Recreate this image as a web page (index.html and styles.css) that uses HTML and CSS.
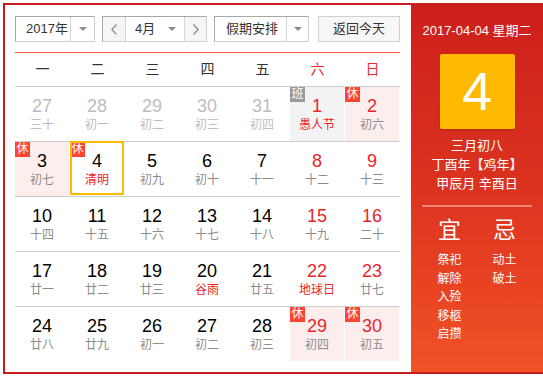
FILE: index.html
```html
<!DOCTYPE html>
<html lang="zh">
<head>
<meta charset="utf-8">
<link rel="stylesheet" href="styles.css">
</head>
<body>
<div class="cal">
  <div class="main">
    <div class="controls">
      <div class="sel sel-year"><span class="sel-text">2017年</span><span class="sel-arrow"><i class="tri"></i></span></div>
      <div class="month-group">
        <span class="nav"><svg width="6" height="11" viewBox="0 0 6 11"><polyline points="5.5,0.5 0.8,5.5 5.5,10.5" fill="none" stroke="#888" stroke-width="1.2"/></svg></span>
        <span class="month"><span class="sel-text">4月</span><i class="tri"></i></span>
        <span class="nav nav-r"><svg width="6" height="11" viewBox="0 0 6 11"><polyline points="0.5,0.5 5.2,5.5 0.5,10.5" fill="none" stroke="#888" stroke-width="1.2"/></svg></span>
      </div>
      <div class="sel sel-hol"><span class="sel-text">假期安排</span><span class="sel-arrow"><i class="tri"></i></span></div>
      <div class="btn-today">返回今天</div>
    </div>
    <div class="week">
      <span>一</span><span>二</span><span>三</span><span>四</span><span>五</span><span class="we">六</span><span class="we">日</span>
    </div>
    <div class="grid">
      <div class="row">
        <div class="cell other"><div class="in"><b>27</b><small>三十</small></div></div>
        <div class="cell other"><div class="in"><b>28</b><small>初一</small></div></div>
        <div class="cell other"><div class="in"><b>29</b><small>初二</small></div></div>
        <div class="cell other"><div class="in"><b>30</b><small>初三</small></div></div>
        <div class="cell other"><div class="in"><b>31</b><small>初四</small></div></div>
        <div class="cell work wkend"><div class="in"><em class="badge badge-work">班</em><b>1</b><small class="fest">愚人节</small></div></div>
        <div class="cell rest wkend"><div class="in"><em class="badge">休</em><b>2</b><small>初六</small></div></div>
      </div>
      <div class="row">
        <div class="cell rest"><div class="in"><em class="badge">休</em><b>3</b><small>初七</small></div></div>
        <div class="cell today"><div class="in"><em class="badge">休</em><b>4</b><small class="fest">清明</small></div><span class="ring"></span></div>
        <div class="cell"><div class="in"><b>5</b><small>初九</small></div></div>
        <div class="cell"><div class="in"><b>6</b><small>初十</small></div></div>
        <div class="cell"><div class="in"><b>7</b><small>十一</small></div></div>
        <div class="cell wkend"><div class="in"><b>8</b><small>十二</small></div></div>
        <div class="cell wkend"><div class="in"><b>9</b><small>十三</small></div></div>
      </div>
      <div class="row">
        <div class="cell"><div class="in"><b>10</b><small>十四</small></div></div>
        <div class="cell"><div class="in"><b>11</b><small>十五</small></div></div>
        <div class="cell"><div class="in"><b>12</b><small>十六</small></div></div>
        <div class="cell"><div class="in"><b>13</b><small>十七</small></div></div>
        <div class="cell"><div class="in"><b>14</b><small>十八</small></div></div>
        <div class="cell wkend"><div class="in"><b>15</b><small>十九</small></div></div>
        <div class="cell wkend"><div class="in"><b>16</b><small>二十</small></div></div>
      </div>
      <div class="row">
        <div class="cell"><div class="in"><b>17</b><small>廿一</small></div></div>
        <div class="cell"><div class="in"><b>18</b><small>廿二</small></div></div>
        <div class="cell"><div class="in"><b>19</b><small>廿三</small></div></div>
        <div class="cell"><div class="in"><b>20</b><small class="fest">谷雨</small></div></div>
        <div class="cell"><div class="in"><b>21</b><small>廿五</small></div></div>
        <div class="cell wkend"><div class="in"><b>22</b><small class="fest">地球日</small></div></div>
        <div class="cell wkend"><div class="in"><b>23</b><small>廿七</small></div></div>
      </div>
      <div class="row last">
        <div class="cell"><div class="in"><b>24</b><small>廿八</small></div></div>
        <div class="cell"><div class="in"><b>25</b><small>廿九</small></div></div>
        <div class="cell"><div class="in"><b>26</b><small>初一</small></div></div>
        <div class="cell"><div class="in"><b>27</b><small>初二</small></div></div>
        <div class="cell"><div class="in"><b>28</b><small>初三</small></div></div>
        <div class="cell rest wkend"><div class="in"><em class="badge">休</em><b>29</b><small>初四</small></div></div>
        <div class="cell rest wkend"><div class="in"><em class="badge">休</em><b>30</b><small>初五</small></div></div>
      </div>
    </div>
  </div>
  <div class="side">
    <div class="s-date">2017-04-04 星期二</div>
    <div class="s-day">4</div>
    <div class="s-lunar">
      <div>三月初八</div>
      <div>丁酉年【鸡年】</div>
      <div>甲辰月 辛酉日</div>
    </div>
    <div class="s-line"></div>
    <div class="s-yiji">
      <div class="col">
        <div class="big">宜</div>
        <div class="items"><div>祭祀</div><div>解除</div><div>入殓</div><div>移柩</div><div>启攒</div></div>
      </div>
      <div class="col">
        <div class="big">忌</div>
        <div class="items"><div>动土</div><div>破土</div></div>
      </div>
    </div>
  </div>
</div>
</body>
</html>
```

FILE: styles.css
```css
* { box-sizing: border-box; }
html, body { margin: 0; padding: 0; background: #fff; overflow: hidden; }
body {
  font-family: "Liberation Sans", Arial, "Noto Sans CJK SC", sans-serif;
  color: #333;
  width: 543px;
  height: 378px;
}
.cal {
  margin: 3px 0 0 3px;
  width: 542px;
  height: 371px;
  border: 2px solid #c91d1d;
  display: flex;
  background: #fff;
}
.main {
  width: 406px;
  flex: none;
  padding: 11px 11px 0 10px;
}
.controls {
  display: flex;
  height: 26px;
  font-size: 13px;
  color: #333;
}
.sel {
  display: flex;
  height: 26px;
  border: 1px solid #cfcfcf;
  border-top-color: #a8a8a8;
  border-left-color: #a8a8a8;
  background: #fff;
}
.sel-text { line-height: 24px; padding-left: 10px; }
.sel-year { width: 80px; }
.sel-year .sel-text { width: 54px; }
.sel-arrow {
  flex: 1;
  border-left: 1px solid #d4d4d4;
  display: flex;
  align-items: center;
  justify-content: center;
}
.tri {
  display: block;
  width: 0; height: 0;
  border-left: 4px solid transparent;
  border-right: 4px solid transparent;
  border-top: 4px solid #8a8a8a;
}
.month-group {
  margin-left: 7px;
  width: 105px;
  height: 26px;
  display: flex;
  border: 1px solid #cfcfcf;
  border-top-color: #a8a8a8;
  border-left-color: #a8a8a8;
}
.nav {
  width: 22px;
  background: #f6f6f6;
  display: flex;
  align-items: center;
  justify-content: center;
}
.nav-r { width: 22px; border-left: 1px solid #d4d4d4; }
.month {
  width: 59px;
  border-left: 1px solid #d4d4d4;
  display: flex;
  align-items: center;
  justify-content: space-between;
  padding-right: 8px;
  background: #fff;
}
.month .sel-text { padding-left: 9px; }
.sel-hol { margin-left: 7px; width: 95px; }
.sel-hol .sel-text { width: 71px; padding-left: 11px; }
.btn-today {
  margin-left: 9px;
  width: 82px;
  height: 26px;
  border: 1px solid #d0d0d0;
  background: #f7f7f7;
  text-align: center;
  line-height: 24px;
}
.week {
  margin-top: 10px;
  border-top: 1px solid #ff5544;
  border-bottom: 1px solid #cccccc;
  height: 35px;
  display: grid;
  grid-template-columns: repeat(7, 55px);
  font-size: 14px;
  color: #333;
}
.week span { text-align: center; line-height: 33px; }
.week .we { color: #f02a2a; }
.row {
  display: grid;
  grid-template-columns: repeat(7, 55px);
  height: 55px;
  border-bottom: 1px solid #cccccc;
}
.row.last { border-bottom: none; }
.cell {
  position: relative;
  height: 54px;
  padding-right: 1px;
}
.in {
  height: 54px;
  position: relative;
  text-align: center;
  padding-top: 9px;
}
.in b {
  display: block;
  font-weight: normal;
  font-size: 18px;
  line-height: 20px;
  color: #000;
}
.in small {
  display: block;
  font-size: 12px;
  line-height: 16px;
  margin-top: 1px;
  color: #8c8c8c;
}
.wkend .in b { color: #e8262a; }
.in small.fest { color: #e8262a; }
.other .in b { color: #bdbdbd; }
.other .in small { color: #bdbdbd; }
.rest .in { background: #fdeeee; }
.work .in { background: #f3f3f3; }
.badge {
  position: absolute;
  left: 0; top: 0;
  width: 15px; height: 15px;
  background: #ff4433;
  color: #fff;
  font-style: normal;
  font-size: 12px;
  line-height: 15px;
  text-align: center;
}
.badge-work { background: #9a9a9a; }
.ring {
  position: absolute;
  left: 0; top: -1px;
  width: 54px; height: 54px;
  border: 2px solid #ffb900;
  pointer-events: none;
}
.side {
  width: 132px;
  flex: none;
  height: 367px;
  background: linear-gradient(180deg, #cc1f1b 0%, #dc3320 50%, #f25226 100%);
  color: #fff;
  display: flex;
  flex-direction: column;
  align-items: center;
  padding-top: 18px;
}
.s-date { font-size: 13px; line-height: 16px; white-space: nowrap; }
.s-day {
  margin-top: 15px;
  width: 75px;
  height: 75px;
  background: #ffb900;
  border-radius: 2px;
  box-shadow: 0 1px 2px rgba(120,30,0,0.35);
  font-size: 54px;
  line-height: 75px;
  text-align: center;
  color: #fff;
}
.s-lunar {
  margin-top: 7px;
  font-size: 13px;
  line-height: 19px;
  text-align: center;
  white-space: nowrap;
}
.s-line {
  margin-top: 12px;
  width: 110px;
  height: 2px;
  background: rgba(255,255,255,0.4);
}
.s-yiji {
  margin-top: 10px;
  width: 110px;
  display: flex;
}
.col { width: 55px; text-align: center; }
.big { font-size: 23px; line-height: 26px; font-weight: normal; }
.items { margin-top: 8px; font-size: 12px; line-height: 18.5px; }
```
